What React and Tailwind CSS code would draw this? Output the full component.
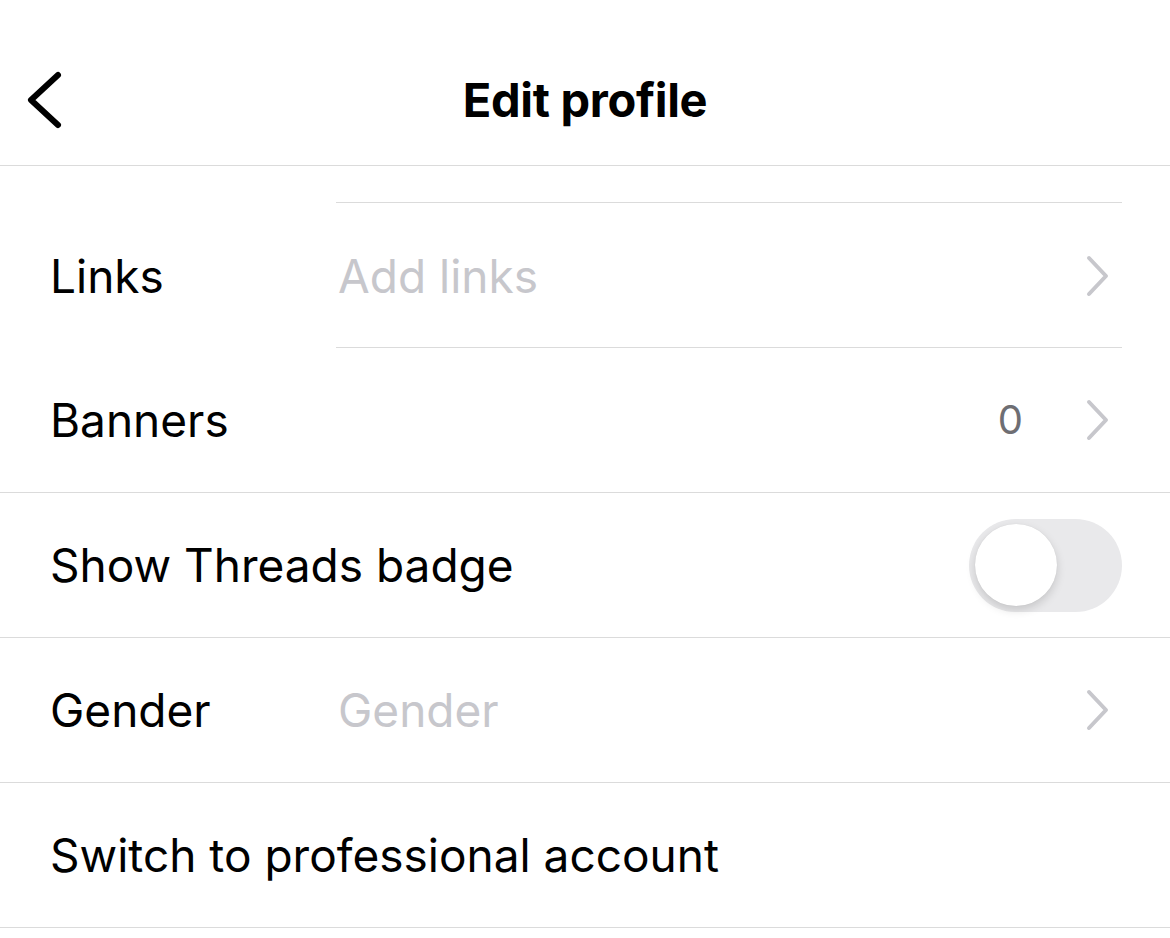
import React from "react";

function Chevron() {
  return (
    <svg width="26" height="42" viewBox="0 0 26 42" fill="none" className="shrink-0">
      <path d="M4 3 L21 21 L4 39" stroke="#c7c7cc" strokeWidth="4" strokeLinecap="round" strokeLinejoin="round" />
    </svg>
  );
}

function Row({ label, value, valueClass = "text-[#c7c7cc]", right, border = "full" }) {
  return (
    <div className={`relative flex h-[145px] items-center pl-[50px] ${border === "full" ? "border-b border-[#dbdbdb]" : ""}`}>
      <div className="w-[288px] shrink-0 whitespace-nowrap text-black">{label}</div>
      <div className={`flex-1 whitespace-nowrap ${valueClass}`}>{value}</div>
      {right}
      {border === "inset" && (
        <div className="absolute bottom-0 left-[336px] right-[48px] h-px bg-[#dbdbdb]" />
      )}
    </div>
  );
}

export default function App() {
  return (
    <div
      className="w-[1170px] min-h-[938px] bg-white text-[46px] leading-none"
      style={{ fontFamily: "Inter, 'Liberation Sans', sans-serif" }}
    >
      <div className="relative flex h-[166px] items-center justify-center border-b border-[#dbdbdb] pt-[34px]">
        <svg
          className="absolute left-[24px] top-[70px]"
          width="40"
          height="60"
          viewBox="0 0 40 60"
          fill="none"
        >
          <path d="M34 5 L7 30 L34 55" stroke="#000" strokeWidth="6" strokeLinecap="round" strokeLinejoin="round" />
        </svg>
        <div className="text-[47px] font-bold tracking-[-0.3px] text-black">Edit profile</div>
      </div>

      <div className="h-[37px] pl-[336px] pr-[48px]">
        <div className="h-full border-b border-[#dbdbdb]" />
      </div>

      <Row
        label="Links"
        value="Add links"
        border="inset"
        right={<div className="pr-[59px]"><Chevron /></div>}
      />
      <Row
        label="Banners"
        value=""
        right={
          <div className="flex items-center gap-[62px] pr-[59px]">
            <span className="text-[40px] text-[#6e6e73]">0</span>
            <Chevron />
          </div>
        }
      />
      <Row
        label="Show Threads badge"
        value=""
        right={
          <div className="pr-[48px]">
            <div className="flex h-[93px] w-[153px] items-center rounded-full bg-[#e9e9eb] pl-[6px]">
              <div className="h-[82px] w-[82px] rounded-full bg-white shadow-[0_4px_10px_rgba(0,0,0,0.15),0_0_1px_rgba(0,0,0,0.1)]" />
            </div>
          </div>
        }
      />
      <Row
        label="Gender"
        value="Gender"
        right={<div className="pr-[59px]"><Chevron /></div>}
      />
      <Row label="Switch to professional account" value="" />
    </div>
  );
}
